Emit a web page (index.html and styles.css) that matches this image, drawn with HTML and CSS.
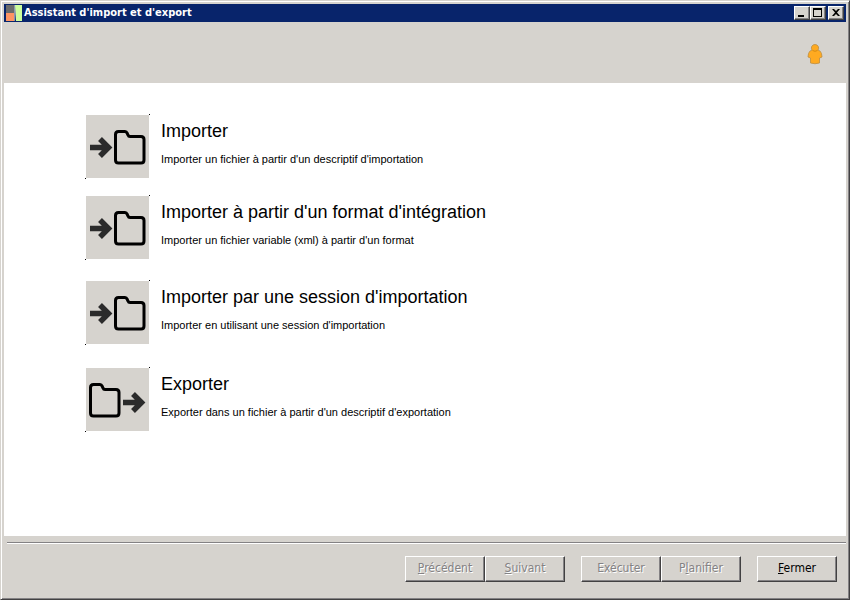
FILE: index.html
```html
<!DOCTYPE html>
<html lang="fr">
<head>
    <meta charset="UTF-8">
    <meta name="viewport" content="width=device-width, initial-scale=1.0">
    <title>Assistant d'import et d'export</title>
    <link rel="stylesheet" href="styles.css">
</head>
<body>
    <!-- Formes communes aux icônes -->
    <svg class="defs" aria-hidden="true">
        <symbol id="folder" viewBox="0 0 32 36" overflow="visible">
            <path d="M4.500 2.500h6.500q1.500 0 2 1.500l1 2q.5 1.500 2 1.500h11q3 0 3 3v20.500q0 3-3 3h-22.500q-3 0-3-3v-25.500q0-3 3-3z" fill="none" stroke="#000" stroke-width="3"/>
        </symbol>
        <symbol id="arrow" viewBox="0 0 24 24" overflow="visible">
            <path d="M0 11.500h18M10 3l8.500 8.500L10 20" fill="none" stroke="#2b2b2b" stroke-width="5.500"/>
        </symbol>
    </svg>

    <div class="window">
        <!-- Barre de titre -->
        <div class="titlebar">
            <svg class="app-icon" viewBox="0 0 16 16" aria-hidden="true">
                <path d="M0 0h8v8H0z" fill="#6b6b6b"/>
                <path d="M0 8h8v8H0z" fill="#ff9563"/>
                <path d="M8 0h2v9l-1 7H8z" fill="#8c9aad"/>
                <path d="M9 0h7v16h-6V9z" fill="#ceff9c"/>
            </svg>
            <h1 class="title">Assistant d'import et d'export</h1>
            <button class="win-btn" aria-label="Réduire">
                <svg viewBox="0 0 12 10"><path d="M2 7h6v2H2z"/></svg>
            </button>
            <button class="win-btn" aria-label="Agrandir">
                <svg viewBox="0 0 12 10"><path d="M1 0h9v9H1zM2 2v6h7V2z" fill-rule="evenodd"/></svg>
            </button>
            <button class="win-btn close" aria-label="Fermer la fenêtre">
                <svg viewBox="0 0 12 10"><path d="M2 1h2l2 2 2-2h2L7 4.500 10 8H8L6 6 4 8H2l3-3.500z"/></svg>
            </button>
        </div>

        <!-- Bandeau -->
        <div class="banner">
            <svg class="user-icon" viewBox="0 0 16 22" aria-hidden="true">
                <path d="M8 1.500a3.500 3.500 0 0 1 3 5.500q2.500.5 3.500 3.500l.5 3.500-2.500 1v5q-4.500 1.500-9 0v-5L1 14l.5-3.500Q2.500 7.500 5 7a3.500 3.500 0 0 1 3-5.500z" fill="#ffaa21" stroke="#bd8e42" stroke-width=".8"/>
                <path d="M5.500 7.500q2.500 1.500 5 0" fill="none" stroke="#d68a10"/>
            </svg>
        </div>

        <!-- Choix de l'assistant -->
        <div class="content">
            <div class="option">
                <button class="option-btn" aria-labelledby="opt1">
                    <svg viewBox="0 0 65 65">
                        <path class="tile" d="M1 1h63v63H1z"/>
                        <path d="M64 0h1v1h-1zM0 64h1v1H0z"/>
                        <use href="#arrow" x="5" y="22" width="24" height="24"/>
                        <use href="#folder" x="29" y="15" width="32" height="36"/>
                    </svg>
                </button>
                <div class="option-text">
                    <h2 id="opt1">Importer</h2>
                    <p>Importer un fichier à partir d'un descriptif d'importation</p>
                </div>
            </div>
            <div class="option">
                <button class="option-btn" aria-labelledby="opt2">
                    <svg viewBox="0 0 65 65">
                        <path class="tile" d="M1 1h63v63H1z"/>
                        <path d="M64 0h1v1h-1zM0 64h1v1H0z"/>
                        <use href="#arrow" x="5" y="22" width="24" height="24"/>
                        <use href="#folder" x="29" y="15" width="32" height="36"/>
                    </svg>
                </button>
                <div class="option-text">
                    <h2 id="opt2">Importer à partir d'un format d'intégration</h2>
                    <p>Importer un fichier variable (xml) à partir d'un format</p>
                </div>
            </div>
            <div class="option">
                <button class="option-btn" aria-labelledby="opt3">
                    <svg viewBox="0 0 65 65">
                        <path class="tile" d="M1 1h63v63H1z"/>
                        <path d="M64 0h1v1h-1zM0 64h1v1H0z"/>
                        <use href="#arrow" x="5" y="22" width="24" height="24"/>
                        <use href="#folder" x="29" y="15" width="32" height="36"/>
                    </svg>
                </button>
                <div class="option-text">
                    <h2 id="opt3">Importer par une session d'importation</h2>
                    <p>Importer en utilisant une session d'importation</p>
                </div>
            </div>
            <div class="option">
                <button class="option-btn" aria-labelledby="opt4">
                    <svg viewBox="0 0 65 65">
                        <path class="tile" d="M1 1h63v63H1z"/>
                        <path d="M64 0h1v1h-1zM0 64h1v1H0z"/>
                        <use href="#folder" x="4" y="15" width="32" height="36"/>
                        <use href="#arrow" x="38" y="24" width="24" height="24"/>
                    </svg>
                </button>
                <div class="option-text">
                    <h2 id="opt4">Exporter</h2>
                    <p>Exporter dans un fichier à partir d'un descriptif d'exportation</p>
                </div>
            </div>
        </div>

        <!-- Boutons du bas -->
        <div class="footer">
            <div class="btn-group">
                <button class="btn" disabled><u>P</u>récédent</button>
                <button class="btn" disabled><u>S</u>uivant</button>
            </div>
            <div class="btn-group">
                <button class="btn" disabled>Exécuter</button>
                <button class="btn" disabled>P<u>l</u>anifier</button>
            </div>
            <button class="btn"><u>F</u>ermer</button>
        </div>
    </div>
</body>
</html>
```
FILE: styles.css
```css
* {
    box-sizing: border-box;
}

body {
    margin: 0;
    background-color: #d6d3ce;
    font-family: "Liberation Sans", Arial, sans-serif;
    color: #000;
}

.defs {
    display: none;
}

/* Cadre de la fenêtre */
.window {
    display: flex;
    flex-direction: column;
    min-height: 100vh;
    padding: 3px;
    background-color: #d6d3ce;
    border: 1px solid;
    border-color: #d6d3ce #424142 #424142 #d6d3ce;
    box-shadow: inset 1px 1px 0 #fff, inset -1px -1px 0 #848284;
}

/* Barre de titre */
.titlebar {
    display: flex;
    align-items: center;
    height: 18px;
    padding: 0 2px;
    background-color: #08246b;
}

.app-icon {
    width: 16px;
    height: 16px;
}

.title {
    flex: 1;
    margin: 0 0 0 2px;
    font-family: "DejaVu Sans Condensed", Tahoma, sans-serif;
    font-size: 11px;
    line-height: 16px;
    font-weight: bold;
    color: #fff;
}

.win-btn {
    width: 16px;
    height: 14px;
    padding: 1px;
    background-color: #d6d3ce;
    border: 1px solid;
    border-color: #fff #424142 #424142 #fff;
    box-shadow: inset -1px -1px 0 #848284;
}

.win-btn svg {
    display: block;
    width: 12px;
    height: 10px;
}

.close {
    margin-left: 2px;
}

/* Bandeau */
.banner {
    display: flex;
    justify-content: flex-end;
    align-items: center;
    height: 61px;
    padding: 2px 23px 0 0;
}

.user-icon {
    width: 16px;
    height: 22px;
}

/* Choix */
.content {
    flex: 1;
    display: grid;
    grid-template-rows: 81px 85px 87px 65px;
    align-content: start;
    padding: 31px 16px 16px 81px;
    background-color: #fff;
}

.option {
    display: flex;
    align-items: flex-start;
    gap: 11px;
}

.option-btn {
    width: 65px;
    height: 65px;
    padding: 0;
    border: none;
    background: none;
}

.option-btn svg {
    display: block;
    width: 65px;
    height: 65px;
}

.tile {
    fill: #d6d3ce;
}

.option-text {
    padding-top: 7px;
}

.option-text h2 {
    margin: 0 0 10px;
    font-size: 18px;
    line-height: 20px;
    font-weight: normal;
}

.option-text p {
    margin: 0;
    font-size: 11px;
    line-height: 16px;
}

/* Boutons du bas */
.footer {
    display: flex;
    justify-content: flex-end;
    gap: 16px;
    margin: 6px 0 0 3px;
    padding: 13px 9px 14px 0;
    border-top: 1px solid #848284;
    box-shadow: inset 0 1px 0 #fff;
}

.btn-group {
    display: flex;
}

.btn {
    width: 80px;
    height: 26px;
    padding: 0 0 2px;
    font-family: "DejaVu Sans Condensed", Tahoma, sans-serif;
    font-size: 12px;
    line-height: 16px;
    color: #000;
    background-color: #d6d3ce;
    border: 1px solid;
    border-color: #fff #424142 #424142 #fff;
    box-shadow: inset -1px -1px 0 #848284;
}

.btn:disabled {
    color: #848284;
    text-shadow: 1px 1px 0 #fff;
}
```
